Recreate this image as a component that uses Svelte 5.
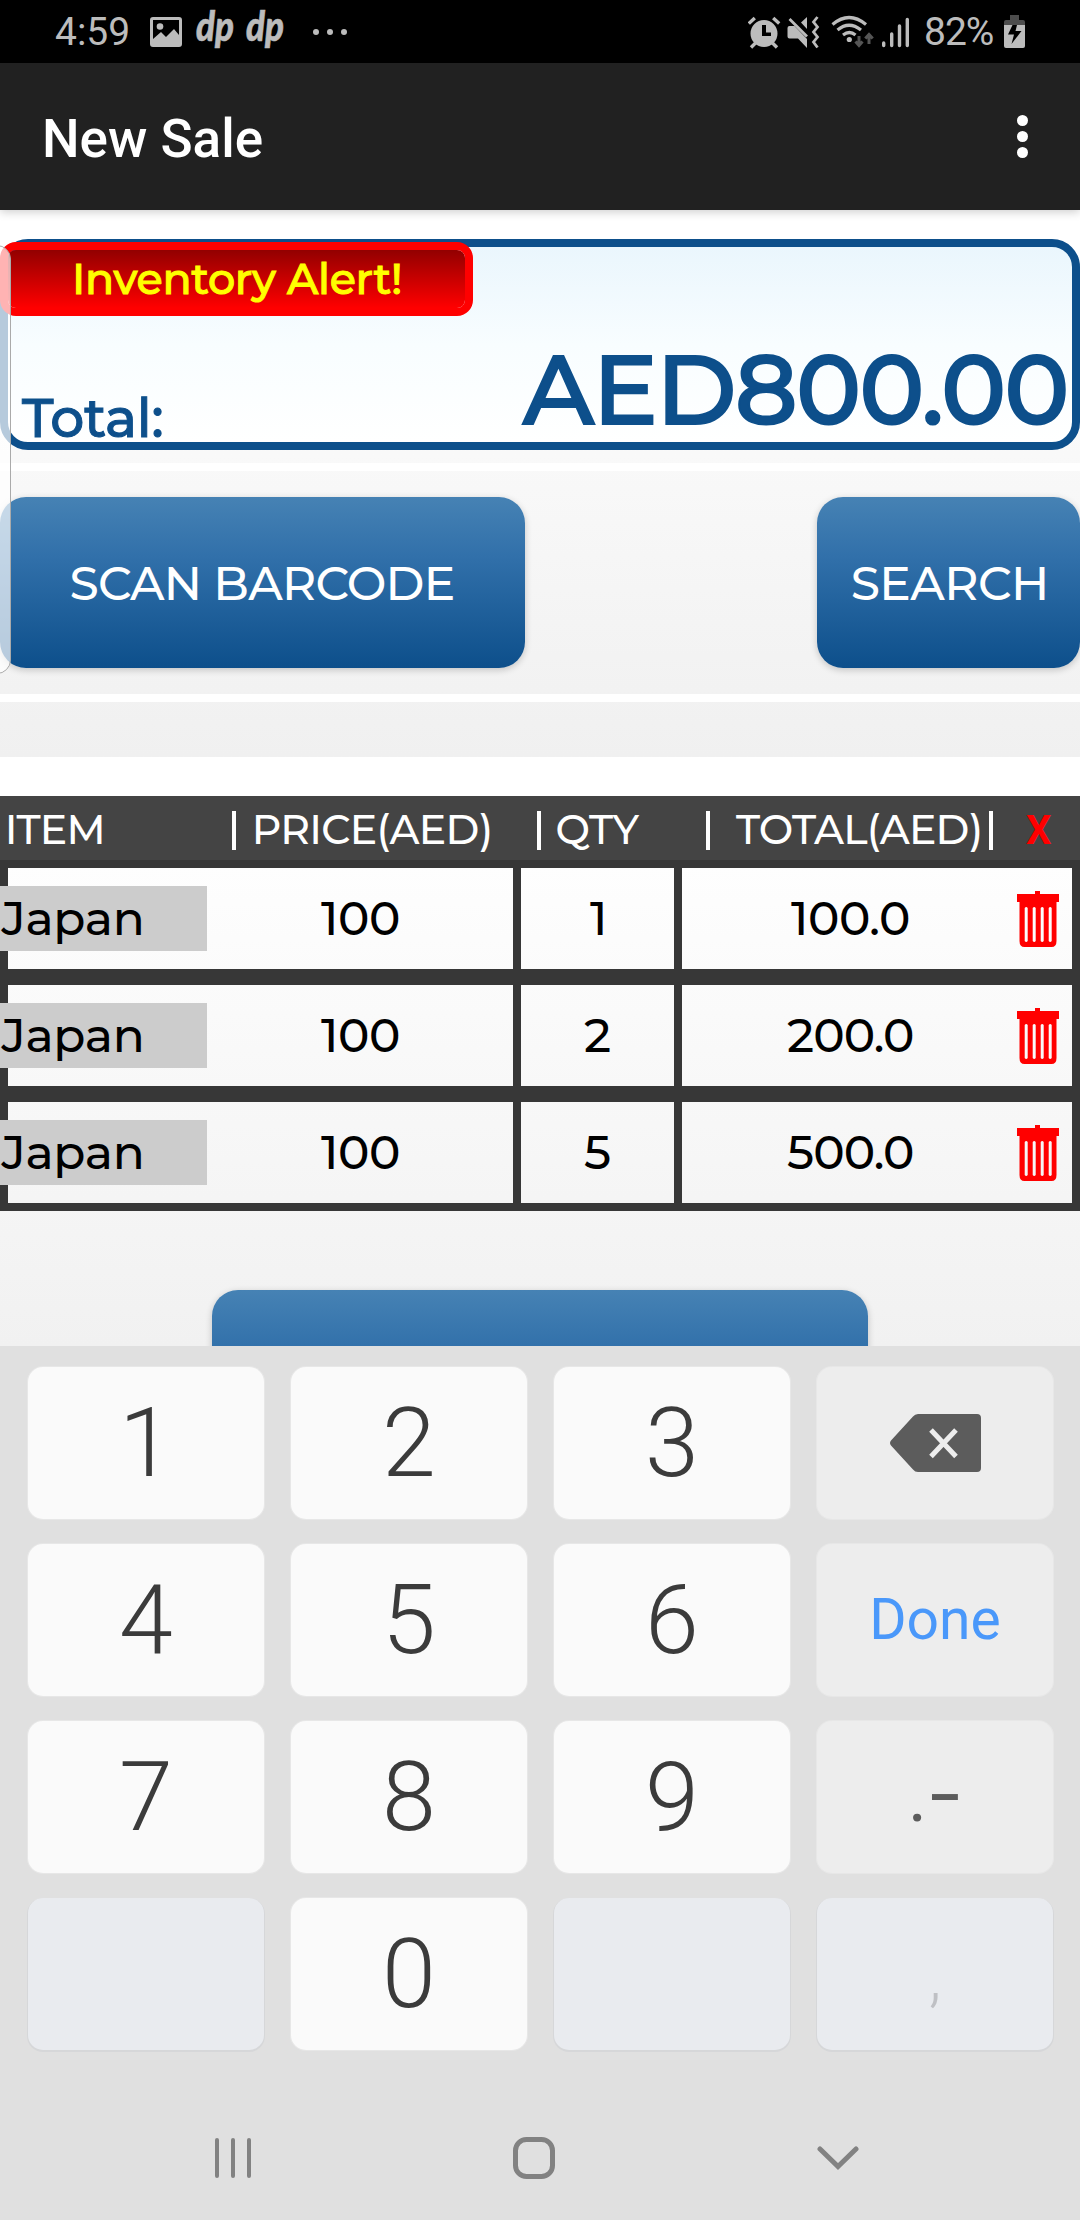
<script lang="ts">
  type Row = { item: string; price: string; qty: string; qtyW: number; total: string; totalW: number }
  type Key = { label?: string; kind?: string }

  let rows: Row[] = $state([
    { item: 'Japan', price: '100', qty: '1', qtyW: 13, total: '100.0', totalW: 116 },
    { item: 'Japan', price: '100', qty: '2', qtyW: 25, total: '200.0', totalW: 124 },
    { item: 'Japan', price: '100', qty: '5', qtyW: 25, total: '500.0', totalW: 124 },
  ])

  const keys: Key[] = [
    { label: '1' }, { label: '2' }, { label: '3' }, { kind: 'back' },
    { label: '4' }, { label: '5' }, { label: '6' }, { label: 'Done', kind: 'done' },
    { label: '7' }, { label: '8' }, { label: '9' }, { label: '.-', kind: 'punct' },
    { kind: 'off' }, { label: '0' }, { kind: 'off' }, { label: ',', kind: 'off' },
  ]

  // cap height of Montserrat, in em
  const CAP = 0.7

  function removeRow(i: number) {
    rows.splice(i, 1)
  }
</script>

<!-- text fitted to a width, the box is exactly one cap height tall; l and r are side bearings in em -->
{#snippet fit(text: string, w: number, cap: number, l = 0.02, r = 0.05)}
  <svg class="fit" width={w} height={cap}>
    <text
      x={(-l * cap) / CAP}
      y={cap}
      font-size={cap / CAP}
      textLength={text.length > 1 ? w + ((l + r) * cap) / CAP : undefined}>{text}</text>
  </svg>
{/snippet}

<div class="screen">
  <div class="status">
    <div class="status-left">
      <span class="clock">4:59</span>
      <svg class="photo" width="32" height="30" viewBox="0 0 32 30">
        <path fill-rule="evenodd" d="M3 0h26a3 3 0 0 1 3 3v24a3 3 0 0 1-3 3H3a3 3 0 0 1-3-3V3a3 3 0 0 1 3-3zM3 3v19l8-7 5 5 8-8 5 6V3z" />
        <circle cx="10" cy="9.500" r="3.300" />
      </svg>
      {#each [0, 1] as n (n)}
        <svg class="dp" width="38" height="40">
          <text x="-1" y="28.500" textLength="38" lengthAdjust="spacingAndGlyphs">dp</text>
        </svg>
      {/each}
      <svg class="more" width="34" height="6">
        <circle cx="3" cy="3" r="3" /><circle cx="17" cy="3" r="3" /><circle cx="31" cy="3" r="3" />
      </svg>
    </div>
    <div class="status-right">
      <svg width="161" height="34" viewBox="748 13 161 34">
        <!-- alarm -->
        <path fill-rule="evenodd" d="M764 18a13.500 13.500 0 1 1 0 27a13.500 13.500 0 1 1 0-27zm-2 5v11h9v-3.500h-5V23z" />
        <path class="line" stroke-width="3.400" d="M748.800 21.500l6-5.500M779.200 21.500l-6-5.500M755.500 41l-4.500 4.500M772.500 41l4.500 4.500" />
        <!-- muted speaker, vibrating -->
        <path d="M787.500 26q0-2 2-2h5l12.500 13v9l-9-9.500h-8.500q-2 0-2-2zM801 20.500l6-5.500v12z" />
        <path class="line" stroke-width="2.800" d="M789.500 17l17.500 17.500M817.500 15l-4 5 4 5-4 5 4 5-4 5 4 5.500" />
        <!-- wifi with traffic arrows -->
        <path class="line" stroke-width="3.200" d="M832.500 22.500q16.500-14 33.500 0M837.500 28q11.500-9.500 23.500 0M843 33q6.500-5 12.500 0" />
        <circle cx="849.300" cy="37.500" r="2.600" />
        <path class="dim" stroke-width="3" d="M859 34v9M855.500 39.500l3.500 4 3.500-4M869 42v-9M865.300 36.500l3.700-4 3.700 4" />
        <!-- signal -->
        <path class="line round" stroke-width="3.400" d="M883.700 41v2.500M891.700 32v11.500M899.500 24v19.500M907.300 17.500v26" />
      </svg>
      <span class="percent">82%</span>
      <svg class="battery" width="21" height="33" viewBox="0 0 21 33">
        <path fill="#4d4d4d" d="M6 0h9v5h4q2 0 2 2v3H0V7q0-2 2-2h4z" />
        <path d="M0 10h21v21q0 2-2 2H2q-2 0-2-2z" />
        <path fill="#000" d="M8.500 10h4.500l-1.500 6h6L7.500 29l2.500-9.500H4z" />
      </svg>
    </div>
  </div>

  <header class="appbar">
    <h1>New Sale</h1>
    <svg width="11" height="43" fill="#fff">
      <circle cx="5.500" cy="5.500" r="5.500" /><circle cx="5.500" cy="21.500" r="5.500" /><circle cx="5.500" cy="37.500" r="5.500" />
    </svg>
  </header>

  <main class="page">
    <section class="upper">
      <div class="total">
        <button class="alert">{@render fit('Inventory Alert!', 324, 30, 0.07, 0.08)}</button>
        <div class="total-label">{@render fit('Total:', 139, 37.5, 0, 0.05)}</div>
        <div class="total-value">{@render fit('AED800.00', 542, 68, 0, 0.045)}</div>
      </div>
      <div class="strip"></div>
      <div class="actions">
        <button class="blue scan">{@render fit('SCAN BARCODE', 381, 33, 0.055, 0.05)}</button>
        <button class="blue search">{@render fit('SEARCH', 192, 33, 0.05, 0.09)}</button>
      </div>
      <div class="strip"></div>
    </section>

    <section class="lower">
      <div class="thead">
        <span class="c-item">{@render fit('ITEM', 94, 28.7, 0.08, 0.09)}</span>
        <span class="bar"></span>
        <span class="c-price">{@render fit('PRICE(AED)', 236, 28.7, 0.08, 0.05)}</span>
        <span class="bar"></span>
        <span class="c-qty">{@render fit('QTY', 82, 28.7, 0.04, 0)}</span>
        <span class="bar"></span>
        <span class="c-total">{@render fit('TOTAL(AED)', 245, 28.7, 0, 0.05)}</span>
        <span class="bar"></span>
        <span class="c-x">X</span>
      </div>
      {#each rows as row, i}
        <div class="row">
          <div class="cell first">
            <div class="name">{@render fit(row.item, 139, 33, 0.01, 0.08)}</div>
            <div class="price">{@render fit(row.price, 77, 33, 0, 0.05)}</div>
          </div>
          <div class="cell qty">{@render fit(row.qty, row.qtyW, 33)}</div>
          <div class="cell last">
            <div class="sum">{@render fit(row.total, row.totalW, 33)}</div>
            <button class="trash" aria-label="Delete" onclick={() => removeRow(i)}>
              <svg width="42" height="56" viewBox="0 0 42 56">
                <path
                  fill="#f00"
                  fill-rule="evenodd"
                  d="M18 0h5v3h19v8h-2.500v39q0 6-5 6h-27q-5 0-5-6V11H0V3h18zM7.700 17v33q1.500 2 3 0V17q-1.500-2-3 0zM15.700 17v33q1.500 2 3 0V17q-1.500-2-3 0zM23.700 17v33q1.500 2 3 0V17q-1.500-2-3 0zM31.700 17v33q1.500 2 3 0V17q-1.500-2-3 0z"
                />
              </svg>
            </button>
          </div>
        </div>
      {/each}
      <button class="blue checkout" aria-label="Checkout"></button>
    </section>
  </main>

  <div class="keyboard">
    {#each keys as key}
      <button class={['key', key.kind].filter(Boolean).join(' ')} aria-label={key.label ?? key.kind}>
        {#if key.kind === 'back'}
          <svg width="91" height="58" viewBox="0 0 91 58">
            <path fill="#5c5c5c" d="M28 0h59q4 0 4 4v50q0 4-4 4H28q-3 0-5-2.500L1 31.500q-2-2.500 0-5L23 2.500Q25 0 28 0z" />
            <path stroke="#ededed" stroke-width="5" d="M41 16l25 26.500M66 16L41 42.500" />
          </svg>
        {:else if key.kind === 'punct'}
          <svg width="236" height="152" fill="#5c5c5c">
            <text x="91" y="99.500" font-size="72">.</text>
            <text x="113" y="99.500" font-size="80" textLength="30" lengthAdjust="spacingAndGlyphs">-</text>
          </svg>
        {:else if key.label}
          <span>{key.label}</span>
        {/if}
      </button>
    {/each}
  </div>

  <nav class="navbar">
    <svg width="36" height="42" fill="none" stroke="#828282" stroke-width="4" stroke-linecap="round">
      <path d="M2 3v36M18 3v36M34 3v36" />
    </svg>
    <svg width="42" height="42" fill="none" stroke="#828282" stroke-width="5">
      <rect x="2.500" y="2.500" width="37" height="37" rx="11" />
    </svg>
    <svg width="42" height="24" fill="none" stroke="#828282" stroke-width="5" stroke-linecap="round">
      <path d="M3 3l18 17.500L39 3" />
    </svg>
  </nav>

  <div class="edge-handle"></div>
</div>

<style>
  :global(body) { margin: 0; }

  .screen {
    position: relative;
    display: flex;
    flex-direction: column;
    width: 1080px;
    height: 2220px;
    overflow: hidden;
    background: #e0e0e0;
    font-family: Roboto, "Liberation Sans", sans-serif;
  }
  svg { display: block; flex: none; }
  button {
    padding: 0;
    border: 0;
    font: inherit;
    background: none;
  }
  .fit {
    overflow: visible;
    font-family: Montserrat, Inter, "Liberation Sans", sans-serif;
    font-weight: 500;
    fill: currentColor;
  }

  /* status bar */
  .status {
    display: flex;
    justify-content: space-between;
    height: 63px;
    box-sizing: border-box;
    padding: 0 55px 0 55px;
    background: #000;
    color: #bcbcbc;
    fill: #bcbcbc;
    font-size: 39px;
    line-height: 64px;
  }
  .status-left, .status-right { display: flex; align-items: center; }
  .clock { width: 95px; }
  .photo { margin-right: 15px; }
  .dp {
    margin-right: 12px;
    font: italic 900 41px Lato, sans-serif;
    stroke: #bcbcbc;
    stroke-width: 0.6;
    overflow: visible;
  }
  .more { margin-left: 16px; }
  .status-right svg .dim { fill: none; stroke: #555; }
  .line { fill: none; stroke: #bcbcbc; }
  .round { stroke-linecap: round; }
  .percent { width: 79px; margin-left: 15px; letter-spacing: -1px; }
  .battery { margin-left: 1px; }

  .appbar {
    position: relative;
    z-index: 1;
    display: flex;
    align-items: center;
    justify-content: space-between;
    height: 147px;
    padding: 0 52px 0 42px;
    background: #212121;
    box-shadow: 0 2px 9px rgba(0, 0, 0, 0.2);
  }
  h1 {
    margin: 5px 0 0;
    color: #fff;
    font-size: 53px;
    font-weight: 500;
  }

  .page {
    height: 1136px;
    overflow: hidden;
  }
  .upper {
    height: 547px;
    box-sizing: border-box;
    padding-top: 29px;
    background: linear-gradient(#fff 8%, #f0f0f0);
  }
  .strip { height: 8px; background: #fff; }

  .total {
    position: relative;
    display: flex;
    justify-content: space-between;
    align-items: flex-end;
    height: 211px;
    box-sizing: border-box;
    margin-bottom: 13px;
    padding: 0 7px 6px 14px;
    border: 8px solid #0d4f8b;
    border-radius: 28px;
    background: linear-gradient(#eaf6fd, #f8fdff 50%, #fff);
    color: #0d4f8b;
  }
  /* bold is the medium cut, thickened */
  .total .fit {
    stroke: currentColor;
    stroke-width: 1px;
  }
  .total .total-value .fit { stroke-width: 2.2px; }
  .total-value { padding-bottom: 12px; }
  .alert {
    position: absolute;
    left: -8px;
    top: -5px;
    display: flex;
    align-items: center;
    justify-content: center;
    width: 473px;
    height: 74px;
    border: 8px solid #f00;
    border-radius: 16px;
    background: linear-gradient(#920000, #f00) padding-box;
    color: #ff0;
  }

  .actions {
    display: flex;
    justify-content: space-between;
    padding: 26px 0;
  }
  .blue {
    display: flex;
    align-items: center;
    justify-content: center;
    height: 171px;
    border-radius: 26px;
    background: linear-gradient(#4682b4, #3170aa 35%, #0d4f8b);
    box-shadow: 0 2px 7px rgba(0, 0, 0, 0.2);
    color: #fff;
  }
  .blue .fit { margin-top: 2px; }
  .scan { width: 525px; }
  .search { width: 263px; }

  .lower {
    height: 589px;
    box-sizing: border-box;
    padding-top: 39px;
    background: linear-gradient(#fff 12%, #f1f1f1);
  }
  .thead {
    display: flex;
    align-items: center;
    height: 64px;
    padding-left: 8px;
    background: #444;
    color: #fff;
  }
  .thead .fit { margin-top: 3px; }
  .c-item { width: 224px; }
  .bar { width: 4px; height: 39px; margin-top: 5px; background: #fff; }
  .c-price { width: 282px; padding-left: 19px; }
  .c-qty { width: 149px; padding-left: 16px; }
  .c-total { width: 253px; padding-left: 26px; }
  .c-x {
    padding: 5px 0 0 33px;
    color: #f00;
    font-size: 40px;
    font-weight: 700;
    line-height: 62px;
  }

  .row {
    display: flex;
    height: 117px;
    color: #000;
  }
  .cell {
    display: flex;
    align-items: center;
    box-sizing: border-box;
    border: 8px solid #373737;
    border-left-width: 0;
  }
  .first { width: 521px; border-left-width: 8px; }
  .name {
    display: flex;
    align-items: center;
    width: 205px;
    height: 65px;
    margin-left: -8px;
    padding-left: 2px;
    background: #ccc;
  }
  .price { padding-left: 114px; }
  .cell .fit { margin-top: -1px; }
  .qty { width: 161px; justify-content: center; }
  .last { width: 398px; }
  .sum {
    display: flex;
    justify-content: center;
    width: 335px;
  }

  .checkout {
    width: 656px;
    margin: 79px auto 0;
  }

  /* numeric keyboard */
  .keyboard {
    display: grid;
    grid-template-columns: repeat(4, 236px);
    grid-auto-rows: 152px;
    gap: 25px 27px;
    padding: 21px 0 0 28px;
  }
  .key {
    display: flex;
    align-items: center;
    justify-content: center;
    border-radius: 15px;
    background: #fafafa;
    box-shadow: 0 0 0 1px #e7e7e7;
    color: #3b3b3b;
    font-size: 97px;
    font-weight: 300;
    line-height: 152px;
  }
  .key.back, .key.done, .key.punct { background: #ededed; }
  .key.done {
    color: #4a98fa;
    font-size: 57px;
    font-weight: 400;
  }
  .key.punct { font-weight: 400; line-height: 1; }
  .key.off {
    padding-top: 6px;
    background: #e9ebef;
    box-shadow: 0 1px 0 1px #d6d7d9;
    color: #bfc0c4;
    font-size: 66px;
    line-height: 146px;
  }

  .navbar {
    display: flex;
    align-items: center;
    justify-content: space-between;
    margin: 87px 221px 0 215px;
    height: 42px;
  }

  .edge-handle {
    position: absolute;
    z-index: 2;
    left: -20px;
    top: 245px;
    width: 29px;
    height: 427px;
    border: 1px solid #aaa;
    border-radius: 14px;
    background: rgba(255, 255, 255, 0.7);
  }
</style>
